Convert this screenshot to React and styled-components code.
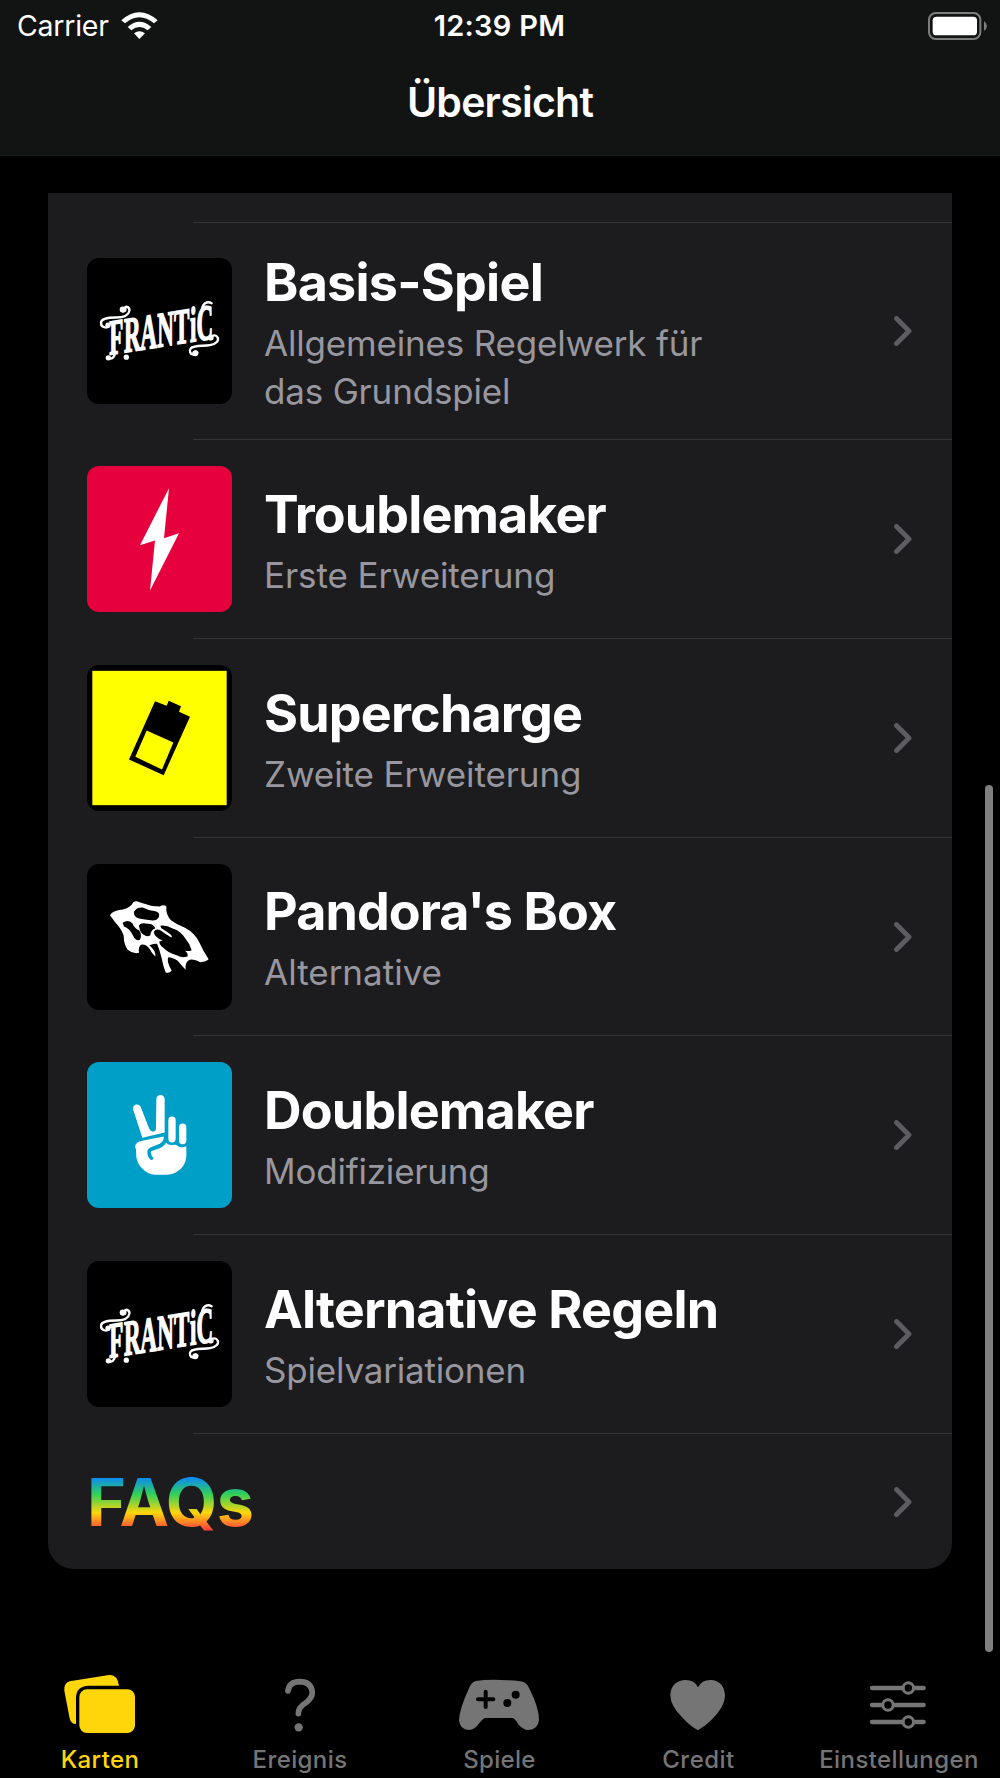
import React from 'react'
import styled, { createGlobalStyle } from 'styled-components'

const GlobalStyle = createGlobalStyle`
  * {
    box-sizing: border-box;
  }
  body {
    margin: 0;
    background: #000;
    color: #fff;
    font-family: Inter, 'Liberation Sans', sans-serif;
  }
`

const Screen = styled.div`
  position: relative;
  width: 1000px;
  height: 1778px;
  display: flex;
  flex-direction: column;
  background: #000;
  overflow: hidden;
`

const Header = styled.header`
  height: 156px;
  background: #121413;
  border-bottom: 1px solid #1b1d1c;
`

const StatusBar = styled.div`
  height: 50px;
  padding: 0 12px 0 17px;
  display: grid;
  grid-template-columns: 1fr auto 1fr;
  align-items: center;
  font-size: 28.5px;
  line-height: 50px;
  .carrier {
    display: flex;
    align-items: center;
    gap: 12px;
    padding-top: 1px;
    letter-spacing: -0.25px;
  }
  .time {
    padding-top: 1px;
    font-size: 29px;
    font-weight: 600;
    letter-spacing: 0.3px;
    transform: translateX(-3px);
  }
  .battery {
    justify-self: end;
  }
  svg {
    display: block;
  }
`

const Title = styled.h1`
  margin: 0;
  padding-top: 27px;
  font-size: 41px;
  font-weight: 600;
  line-height: 50px;
  letter-spacing: -0.75px;
  text-align: center;
`

const Card = styled.main`
  width: 904px;
  margin: 37px 0 0 48px;
  padding-top: 29px;
  background: #1c1c1e;
  border-radius: 0 0 26px 26px;
`

const Row = styled.div`
  height: ${({ $height }) => $height}px;
  padding: 1px 40px 0 39px;
  display: flex;
  align-items: center;
  background: linear-gradient(#343437, #343437) 145px 0 / 759px 1px no-repeat;
  .chevron {
    flex: none;
    margin-left: auto;
  }
`

const Tile = styled.svg`
  flex: none;
  width: 145px;
  height: 146px;
  margin-right: 32px;
  border-radius: 12px;
  background: ${({ $bg }) => $bg};
`

const Texts = styled.div`
  width: 500px;
  padding-top: 3px;
  white-space: nowrap;
  h2 {
    margin: 0;
    font-size: 52px;
    font-weight: 700;
    line-height: 64px;
    letter-spacing: ${({ $spacing }) => $spacing}px;
  }
  p {
    margin: 0;
    padding-top: 4px;
    font-size: 35px;
    line-height: 48px;
    letter-spacing: ${({ $sub }) => $sub}px;
    color: #98979f;
    white-space: pre-line;
  }
`

const Faq = styled.span`
  padding-top: 1px;
  font-size: 66.5px;
  font-weight: 700;
  line-height: 80px;
  letter-spacing: -0.6px;
  background: linear-gradient(#0a84ff 19%, #30d158 41%, #ffd60a 64%, #ff453a 84%);
  background-clip: text;
  -webkit-background-clip: text;
  color: transparent;
`

const ScrollThumb = styled.div`
  position: absolute;
  right: 7px;
  top: 785px;
  width: 8px;
  height: 867px;
  border-radius: 4px;
  background: #7f7f7f;
`

const TabBar = styled.nav`
  height: 128px;
  margin-top: auto;
  display: grid;
  grid-template-columns: 200px 200px 199px 199px 202px;
`

const Tab = styled.a`
  display: flex;
  flex-direction: column;
  align-items: center;
  color: ${({ $active }) => ($active ? '#ffd60a' : '#757575')};
  font-size: 24px;
  font-weight: 500;
  line-height: 30px;
  letter-spacing: ${({ $spacing }) => $spacing}px;
  svg {
    display: block;
    width: 100px;
    height: 95px;
  }
`

const WifiIcon = () => (
  <svg width="37" height="28" viewBox="360 29 111 84" fill="#fff">
    <path d="M361 54 Q415 6 470 54 L459 63 Q415 27 372 63Z" />
    <path d="M380 74 Q415 43 451 74 L440 84 Q415 64 391 84Z" />
    <path d="M399 93 Q415 80 432 93 L415 110Z" />
  </svg>
)

const BatteryIcon = () => (
  <svg className="battery" width="60" height="28" viewBox="1284 30 180 84">
    <rect x="1287" y="33" width="154" height="78" rx="20" fill="none" stroke="#7c7d7c" strokeWidth="6" />
    <rect x="1298" y="44" width="133" height="56" rx="11" fill="#fff" />
    <path d="M1452 57 Q1461 64 1461 72 Q1461 80 1452 87Z" fill="#7c7d7c" />
  </svg>
)

const Chevron = () => (
  <svg className="chevron" width="18" height="30" viewBox="0 0 18 30">
    <path d="M2.500 2.500 L15 15 L2.500 27.500" fill="none" stroke="#5d5d61" strokeWidth="4.800" strokeLinecap="round" strokeLinejoin="round" />
  </svg>
)

const LogoTile = () => (
  <Tile $bg="#000" viewBox="21 25 435 437">
    <g transform="skewY(-9)" fill="#fff">
      <text
        transform="scale(0.46 1)"
        x="191 287 393 504 613 717 760"
        y="329"
        fontFamily="'Liberation Serif', serif"
        fontWeight="700"
        fontSize="150"
        stroke="#fff"
        strokeWidth="5"
      >
        FRANTiC
      </text>
    </g>
    <g fill="none" stroke="#fff" strokeWidth="7" strokeLinecap="round">
      <path d="M124 182 C129 188 138 184 136 176 C131 166 151 170 148 183 C145 201 124 203 108 203 C86 203 65 205 63 218 C62 232 82 239 87 227" />
      <path d="M352 308 C347 302 339 308 342 314 C330 316 327 302 332 296 C342 284 370 290 390 286 C410 283 417 272 413 263 C407 252 390 257 390 268" />
      <path d="M105 305 C105 322 96 330 84 325" />
      <path d="M366 178 C368 160 382 153 395 160" />
    </g>
    <g fill="#fff">
      <circle cx="128" cy="179" r="9" />
      <circle cx="84" cy="226" r="8" />
      <circle cx="346" cy="310" r="9" />
      <circle cx="393" cy="264" r="8" />
      <circle cx="139" cy="322" r="8" />
      <circle cx="85" cy="324" r="8" />
    </g>
  </Tile>
)

const BoltTile = () => (
  <Tile $bg="#e6003e" viewBox="21 18 435 437">
    <path d="M267 84 L252 234 L297 219 L210 391 L225 241 L180 255Z" fill="#fff" />
  </Tile>
)

const BatteryTile = () => (
  <Tile $bg="#000" viewBox="21 21 435 437">
    <rect x="37" y="38" width="403" height="403" fill="#ff0" />
    <path d="M225 129 L260 143 L266 128 L303 144 L297 161 L330 176 L251 351 L147 304Z" />
    <path d="M200 217 L280 253 L246 334 L166 296Z" fill="#ff0" />
  </Tile>
)

const SkullTile = () => (
  <Tile $bg="#000" viewBox="21 24 435 437">
    <path
      d="M90 177 Q97 163 128 160 Q151 155 160 138 Q169 132 183 140 Q211 151 239 151 Q252 143 259 151 Q257 177 274 193 Q291 206 315 215 Q344 231 357 257 Q369 284 386 309 Q379 316 361 318 Q343 308 329 311 Q314 317 317 341 Q302 325 293 314 Q278 303 265 303 Q258 314 275 343 Q269 352 257 349 Q249 328 245 306 Q239 281 231 263 Q221 263 208 267 Q229 285 226 301 Q216 293 208 277 Q196 262 183 266 Q174 273 177 290 Q158 294 143 281 Q131 264 131 238 Q124 218 106 199Z"
      fill="#fff"
    />
    <path d="M162 167 Q169 153 188 154 Q205 163 226 165 Q240 168 237 181 Q233 193 218 193 Q193 190 177 187 Q160 182 162 167Z" />
    <path d="M128 200 Q143 188 157 201 Q163 216 178 223 Q187 237 180 251 Q167 256 159 238 Q149 217 132 211Z" />
    <path d="M177 207 Q184 198 203 203 Q222 203 226 217 Q213 220 211 237 Q202 244 191 236 Q178 228 177 207Z" />
    <path d="M241 209 Q256 205 278 217 Q303 225 316 247 Q330 263 335 282 Q326 287 314 283 Q324 290 323 300 Q308 307 292 298 Q264 291 250 275 Q237 265 238 256 L248 253 Q220 242 222 226 Q229 216 242 223 Q257 234 274 244 Q279 242 269 233 Q255 222 244 216Z" />
  </Tile>
)

const PeaceTile = () => (
  <Tile $bg="#009fc8" viewBox="21 21 435 437">
    <g fill="#fff">
      <path d="M159 162 C157 148 175 143 182 155 L207 219 Q212 230 222 229 Q228 228 228 217 L229 132 C229 115 254 115 254 132 L254 232 L187 248Z" />
      <rect x="265" y="184" width="22" height="78" rx="11" />
      <rect x="297" y="205" width="22" height="62" rx="11" />
      <path d="M171 263 Q174 260 187 257 L251 244 Q253 257 239 266 L211 277 Q201 282 202 294 Q203 305 211 313 Q217 317 221 309 Q211 299 213 288 L237 280 Q251 276 258 263 Q267 272 281 269 Q290 267 294 273 Q304 279 319 273 L319 303 Q317 331 295 347 Q279 359 259 359 L226 359 Q202 357 186 339 Q172 325 169 306 L168 282 Q161 274 171 263Z" />
    </g>
  </Tile>
)

// tab icons share one grid: 300 x 285 units per 100 x 95 px
const TabIcon = ({ children }) => <svg viewBox="0 0 300 285">{children}</svg>

const CardsIcon = () => (
  <TabIcon>
    <path d="M59 94 L177 75 Q202 72 207 107 L116 107 Q78 108 78 145 L78 222 Q61 222 58 200 L43 122 Q41 99 59 94Z" fill="currentColor" />
    <rect x="88" y="118" width="167" height="131" rx="23" fill="currentColor" />
  </TabIcon>
)

const QuestionIcon = () => (
  <TabIcon>
    <path d="M114 123 Q117 96 148 95 Q184 95 187 127 Q187 144 168 158 Q144 173 145 191" fill="none" stroke="currentColor" strokeWidth="17" strokeLinecap="round" />
    <circle cx="146" cy="232" r="12.500" fill="currentColor" />
  </TabIcon>
)

const GamepadIcon = () => (
  <TabIcon>
    <path
      d="M77 93 Q117 87 175 91 Q212 92 222 97 Q232 101 240 120 Q267 174 267 210 Q264 239 235 240 Q219 239 206 224 Q195 207 189 204 L104 204 Q98 207 88 219 Q75 239 57 240 Q29 239 27 210 Q28 179 56 117 Q64 96 77 93Z"
      fill="currentColor"
    />
    <path d="M107 125 V171 M84 148 H130" stroke="#000" strokeWidth="12" strokeLinecap="round" />
    <circle cx="197" cy="134" r="12" />
    <circle cx="172" cy="159" r="12" />
  </TabIcon>
)

const HeartIcon = () => (
  <TabIcon>
    <path d="M147 241 Q124 229 102 205 Q64 168 64 135 Q66 94 107 90 Q137 89 147 112 Q159 88 188 90 Q226 95 228 137 Q228 168 190 207 Q169 229 147 241Z" fill="currentColor" />
  </TabIcon>
)

const SlidersIcon = () => (
  <TabIcon>
    <g stroke="currentColor" strokeWidth="13" strokeLinecap="round">
      <path d="M69 114 H224 M69 165 H224 M69 216 H224" />
    </g>
    <g fill="#000" stroke="currentColor" strokeWidth="9">
      <circle cx="178" cy="114" r="15.500" />
      <circle cx="117" cy="165" r="15.500" />
      <circle cx="178" cy="216" r="15.500" />
    </g>
  </TabIcon>
)

const games = [
  { title: 'Basis-Spiel', text: 'Allgemeines Regelwerk für\ndas Grundspiel', Icon: LogoTile, height: 217, spacing: -0.75, sub: -0.18 },
  { title: 'Troublemaker', text: 'Erste Erweiterung', Icon: BoltTile, height: 199, spacing: -0.9, sub: -0.1 },
  { title: 'Supercharge', text: 'Zweite Erweiterung', Icon: BatteryTile, height: 199, spacing: -0.8, sub: -0.1 },
  { title: "Pandora's Box", text: 'Alternative', Icon: SkullTile, height: 198, spacing: -0.9, sub: 0 },
  { title: 'Doublemaker', text: 'Modifizierung', Icon: PeaceTile, height: 199, spacing: -0.8, sub: -0.2 },
  { title: 'Alternative Regeln', text: 'Spielvariationen', Icon: LogoTile, height: 199, spacing: -0.8, sub: -0.2 },
]

const tabs = [
  { label: 'Karten', Icon: CardsIcon, active: true, spacing: 0.4 },
  { label: 'Ereignis', Icon: QuestionIcon, spacing: 0.4 },
  { label: 'Spiele', Icon: GamepadIcon, spacing: 0.3 },
  { label: 'Credit', Icon: HeartIcon, spacing: 0.5 },
  { label: 'Einstellungen', Icon: SlidersIcon, spacing: 0.4 },
]

const App = () => {
  return (
    <Screen>
      <GlobalStyle />
      <Header>
        <StatusBar>
          <div className="carrier">
            <span>Carrier</span>
            <WifiIcon />
          </div>
          <span className="time">12:39 PM</span>
          <BatteryIcon />
        </StatusBar>
        <Title>Übersicht</Title>
      </Header>
      <Card>
        {games.map(({ title, text, Icon, height, spacing, sub }) => (
          <Row key={title} $height={height}>
            <Icon />
            <Texts $spacing={spacing} $sub={sub}>
              <h2>{title}</h2>
              <p>{text}</p>
            </Texts>
            <Chevron />
          </Row>
        ))}
        <Row $height={136}>
          <Faq>FAQs</Faq>
          <Chevron />
        </Row>
      </Card>
      <TabBar>
        {tabs.map(({ label, Icon, active, spacing }) => (
          <Tab key={label} $active={active} $spacing={spacing}>
            <Icon />
            {label}
          </Tab>
        ))}
      </TabBar>
      <ScrollThumb />
    </Screen>
  )
}

export default App
